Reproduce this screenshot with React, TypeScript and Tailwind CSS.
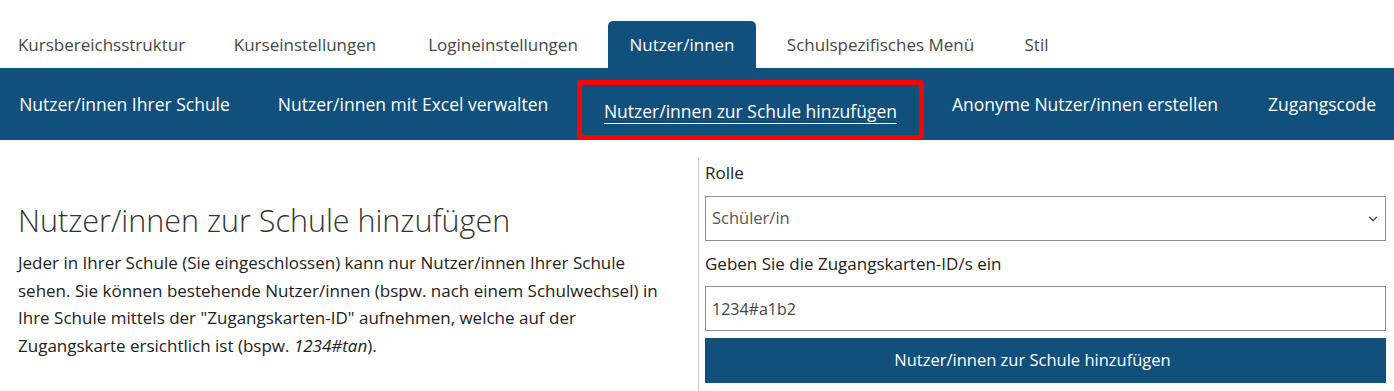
import { ChevronDown } from "lucide-react";

const tabs = [
  { label: "Kursbereichsstruktur", w: "w-[207px]" },
  { label: "Kurseinstellungen", w: "w-[186px]" },
  { label: "Logineinstellungen", w: "w-[196px]" },
  { label: "Nutzer/innen", w: "w-[148px]", active: true },
  { label: "Schulspezifisches Menü", w: "w-[235px]" },
  { label: "Stil", w: "w-[63px]" },
];

const subnav = [
  { label: "Nutzer/innen Ihrer Schule", w: "w-[249px]" },
  { label: "Nutzer/innen mit Excel verwalten", w: "w-[328px]" },
  { label: "Nutzer/innen zur Schule hinzufügen", w: "w-[347px]", active: true },
  { label: "Anonyme Nutzer/innen erstellen", w: "w-[322px]" },
  { label: "Zugangscode", w: "w-[152px]" },
];

export default function App() {
  return (
    <div className="w-[1394px] h-[391px] overflow-hidden bg-white font-['Open_Sans',sans-serif] text-[#222]">
      {/* main tabs */}
      <nav className="flex gap-[7px] h-[68px] items-end -ml-[2px]">
        {tabs.map((t) => (
          <div
            key={t.label}
            className={`${t.w} h-[47px] shrink-0 flex items-center justify-center pt-[1px] text-[17px] whitespace-nowrap rounded-t-[5px] ${
              t.active ? "bg-[#11507c] text-white" : "text-[#474747]"
            }`}
          >
            {t.label}
          </div>
        ))}
      </nav>

      {/* sub navigation */}
      <nav className="flex h-[72px] bg-[#11507c] text-white text-[17.5px] whitespace-nowrap">
        {subnav.map((s) =>
          s.active ? (
            <div
              key={s.label}
              className={`${s.w} shrink-0 mt-[12px] h-[60px] border-[5px] border-[#ff0000] rounded-[4px] flex items-center justify-center`}
            >
              <span className="border-b border-white leading-[24px] pt-[2px]">{s.label}</span>
            </div>
          ) : (
            <div key={s.label} className={`${s.w} shrink-0 flex items-center justify-center`}>
              {s.label}
            </div>
          )
        )}
      </nav>

      {/* content */}
      <div className="flex pt-[18px]">
        <section className="w-[698px] shrink-0 pl-[18px] pr-[4px] pt-[42px]">
          <h1 className="text-[30.5px] font-light leading-[40px] text-[#333] whitespace-nowrap">
            Nutzer/innen zur Schule hinzufügen
          </h1>
          <p className="mt-[9px] text-[17px] leading-[27.5px] text-[#222] whitespace-nowrap">
            Jeder in Ihrer Schule (Sie eingeschlossen) kann nur Nutzer/innen Ihrer Schule
            <br />
            sehen. Sie können bestehende Nutzer/innen (bspw. nach einem Schulwechsel) in
            <br />
            Ihre Schule mittels der "Zugangskarten-ID" aufnehmen, welche auf der
            <br />
            Zugangskarte ersichtlich ist (bspw. <em>1234#tan</em>).
          </p>
        </section>

        <section className="flex-1 border-l border-[#c8c8c8] pl-[6px] pr-[8px] h-[240px]">
          <div className="h-[29px] flex items-center text-[17px]">Rolle</div>
          <div className="mt-[9px] h-[45px] border border-[#8c9198] flex items-center justify-between pl-[6px] pr-[5px] text-[16.5px] text-[#555]">
            <span>Schüler/in</span>
            <ChevronDown size={14} strokeWidth={2} className="text-[#444]" />
          </div>
          <div className="mt-[9px] h-[28px] flex items-center text-[17px]">Geben Sie die Zugangskarten-ID/s ein</div>
          <div className="mt-[8px] h-[45px] border border-[#8c9198] flex items-center pl-[6px] text-[16px] text-[#444]">
            1234#a1b2
          </div>
          <button className="mt-[7px] w-full h-[45px] bg-[#11507c] text-white text-[16.5px] flex items-center justify-center pr-[26px]">
            Nutzer/innen zur Schule hinzufügen
          </button>
        </section>
      </div>
    </div>
  );
}
